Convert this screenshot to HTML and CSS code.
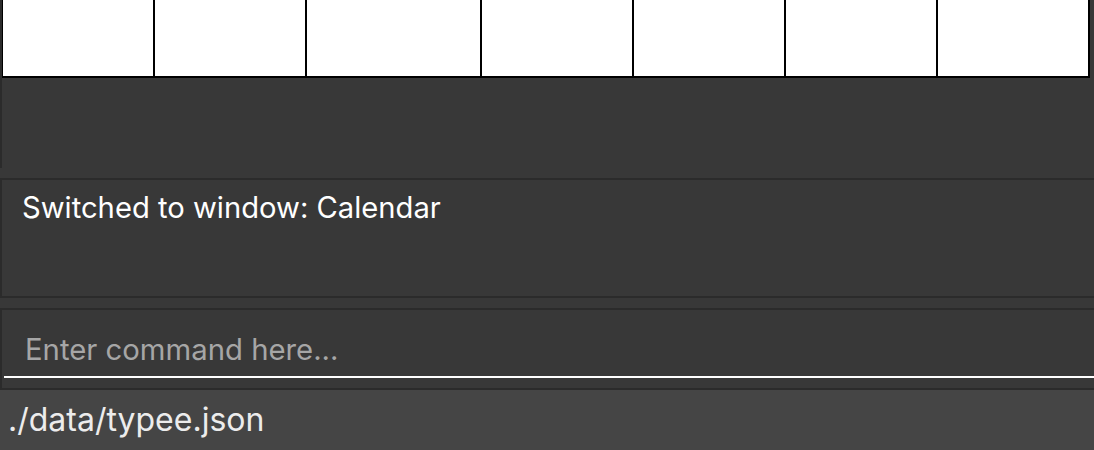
FILE: index.html
```html
<!DOCTYPE html>
<html>
<head>
<meta charset="utf-8">
<link rel="stylesheet" href="styles.css">
</head>
<body>
<div class="app">
  <div class="calendar-panel">
    <div class="calendar-grid">
      <div class="cell"></div>
      <div class="cell"></div>
      <div class="cell"></div>
      <div class="cell"></div>
      <div class="cell"></div>
      <div class="cell"></div>
      <div class="cell"></div>
    </div>
  </div>
  <div class="result-display">Switched to window: Calendar</div>
  <div class="command-box">
    <input class="command-input" type="text" placeholder="Enter command here...">
  </div>
  <div class="status-bar">./data/typee.json</div>
</div>
</body>
</html>
```

FILE: styles.css
```css
html, body {
  margin: 0;
  padding: 0;
  background: #383838;
  height: 100%;
  overflow: hidden;
}

.app {
  display: flex;
  flex-direction: column;
  width: 1094px;
  height: 450px;
  font-family: Inter, "Liberation Sans", sans-serif;
}

.calendar-panel {
  height: 168px;
  box-sizing: border-box;
  border-left: 2px solid #2b2b2b;
  background: #383838;
}

.calendar-grid {
  display: grid;
  grid-template-columns: 150px 150px 173px 150px 150px 150px 150px;
  gap: 2px;
  width: max-content;
  height: 78px;
  box-sizing: border-box;
  background: #000;
  border-left: 1px solid #000;
  border-right: 2px solid #000;
  border-bottom: 2px solid #000;
}

.cell {
  background: #fff;
}

.result-display {
  margin-top: 10px;
  height: 120px;
  box-sizing: border-box;
  border: 2px solid #2b2b2b;
  border-right: none;
  padding: 10px 0 0 20px;
  color: #fff;
  font-size: 29.2px;
  line-height: 35px;
}

.command-box {
  margin-top: 10px;
  height: 82px;
  box-sizing: border-box;
  border: 2px solid #2b2b2b;
  border-right: none;
  padding: 0 0 10px 2px;
  display: flex;
  flex-direction: column;
}

.command-input {
  display: block;
  width: 100%;
  height: 68px;
  box-sizing: border-box;
  margin: 0;
  padding: 22px 0 10px 21px;
  border: none;
  border-bottom: 2px solid #fff;
  background: transparent;
  color: #fff;
  font-family: Inter, "Liberation Sans", sans-serif;
  font-size: 29.3px;
  line-height: 34px;
  outline: none;
}

.command-input::placeholder {
  color: #a6a6a6;
}

.status-bar {
  flex: 1;
  background: #454545;
  color: #ececec;
  font-size: 32px;
  line-height: 38px;
  padding: 11px 0 0 8px;
}
```
